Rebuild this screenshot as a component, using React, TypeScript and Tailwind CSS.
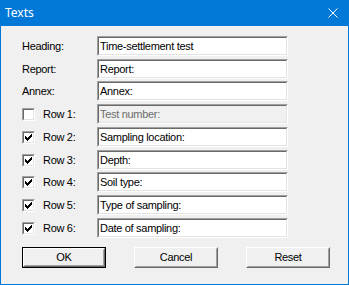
import React from "react";

const rows: { label: string; value: string; checkbox?: boolean; checked?: boolean; disabled?: boolean; mt: string }[] = [
  { label: "Heading:", value: "Time-settlement test", mt: "mt-[10px]" },
  { label: "Report:", value: "Report:", mt: "mt-[3px]" },
  { label: "Annex:", value: "Annex:", mt: "mt-[2px]" },
  { label: "Row 1:", value: "Test number:", checkbox: true, checked: false, disabled: true, mt: "mt-[3px]" },
  { label: "Row 2:", value: "Sampling location:", checkbox: true, checked: true, mt: "mt-[3px]" },
  { label: "Row 3:", value: "Depth:", checkbox: true, checked: true, mt: "mt-[3px]" },
  { label: "Row 4:", value: "Soil type:", checkbox: true, checked: true, mt: "mt-[2px]" },
  { label: "Row 5:", value: "Type of sampling:", checkbox: true, checked: true, mt: "mt-[3px]" },
  { label: "Row 6:", value: "Date of sampling:", checkbox: true, checked: true, mt: "mt-[3px]" },
];

function Checkbox({ checked }: { checked: boolean }) {
  return (
    <div className="w-[13px] h-[13px] border border-t-[#a0a0a0] border-l-[#a0a0a0] border-b-white border-r-white shrink-0">
      <div className="w-full h-full border border-t-[#696969] border-l-[#696969] border-b-[#e3e3e3] border-r-[#e3e3e3] bg-white relative">
        {checked && (
          <svg width="9" height="9" viewBox="0 0 9 9" className="absolute left-0 top-0">
            <path d="M1.5 3.5 L3.5 5.5 L7.5 1.5 M1.5 4.5 L3.5 6.5 L7.5 2.5 M1.5 5.5 L3.5 7.5 L7.5 3.5" stroke="#000" strokeWidth="1" fill="none" shapeRendering="crispEdges" />
          </svg>
        )}
      </div>
    </div>
  );
}

function Button({ label, isDefault }: { label: string; isDefault?: boolean }) {
  const inner = (
    <div className="h-full w-full border border-t-white border-l-white border-b-[#696969] border-r-[#696969]">
      <div className="h-full w-full border border-t-[#f0f0f0] border-l-[#f0f0f0] border-b-[#a0a0a0] border-r-[#a0a0a0] flex items-center justify-center text-black">
        {label}
      </div>
    </div>
  );
  return isDefault ? (
    <div className="w-[84px] h-[21px] border border-black bg-[#f0f0f0]">{inner}</div>
  ) : (
    <div className="w-[84px] h-[21px] bg-[#f0f0f0]">{inner}</div>
  );
}

export default function App() {
  return (
    <div
      className="w-[349px] h-[285px] bg-[#f0f0f0] border-x border-b border-[#0078d7] flex flex-col text-[11px] tracking-[-0.3px] text-black"
      style={{ fontFamily: '"Liberation Sans", Arial, sans-serif' }}
    >
      <div className="h-[26px] -mx-px bg-[#0078d7] flex items-center justify-between pl-[5px] pr-[11px] shrink-0">
        <span className="text-white text-[12px] leading-none tracking-normal" style={{ fontFamily: '"Noto Sans", "Open Sans", sans-serif' }}>
          Texts
        </span>
        <svg width="10" height="10" viewBox="0 0 10 10">
          <path d="M0.5 0.5 L9.5 9.5 M9.5 0.5 L0.5 9.5" stroke="#fff" strokeWidth="1" fill="none" />
        </svg>
      </div>
      <div className="flex flex-col pl-[21px]">
        {rows.map((r) => (
          <div key={r.label} className={`flex items-center h-[20px] ${r.mt}`}>
            <div className="w-[75px] flex items-center">
              {r.checkbox ? (
                <>
                  <Checkbox checked={!!r.checked} />
                  <span className="ml-[8px]">{r.label}</span>
                </>
              ) : (
                <span>{r.label}</span>
              )}
            </div>
            <div className="w-[191px] h-[20px] border border-t-[#a0a0a0] border-l-[#a0a0a0] border-b-white border-r-white">
              <div
                className={`h-full w-full border border-t-[#696969] border-l-[#696969] border-b-[#e3e3e3] border-r-[#e3e3e3] pl-[1px] flex items-center leading-none ${
                  r.disabled ? "bg-[#f0f0f0] text-[#6d6d6d]" : "bg-white"
                }`}
              >
                {r.value}
              </div>
            </div>
          </div>
        ))}
      </div>
      <div className="flex pl-[21px] mt-[9px] gap-[28px]">
        <Button label="OK" isDefault />
        <Button label="Cancel" />
        <Button label="Reset" />
      </div>
    </div>
  );
}
